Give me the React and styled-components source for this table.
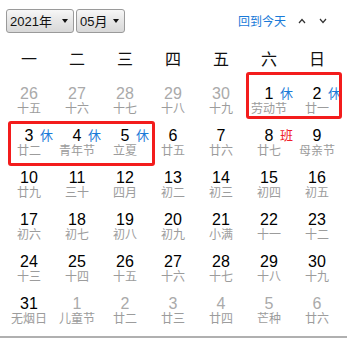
import React from "react";
import styled, { createGlobalStyle } from "styled-components";

const Global = createGlobalStyle`
  html, body { margin: 0; padding: 0; background: #fff; }
  body { font-family: "Liberation Sans", "Noto Sans CJK SC", sans-serif; }
`;

const Root = styled.div`
  position: relative;
  width: 347px;
  height: 341px;
  overflow: hidden;
`;

const Header = styled.div`
  display: flex;
  align-items: center;
  height: 24px;
  padding: 9px 0 0 6px;
`;

const SelectWrap = styled.div`
  position: relative;
  width: ${(p) => p.$w}px;
  height: 24px;
  margin-right: 2px;
`;

const Select = styled.select`
  appearance: none;
  -webkit-appearance: none;
  box-sizing: border-box;
  width: 100%;
  height: 24px;
  margin: 0;
  padding: 0 0 0 3px;
  border: 1px solid #9a9a9a;
  border-radius: 3px;
  background: linear-gradient(#f7f7f7, #e6e6e6 50%, #d8d8d8);
  font-family: "Liberation Sans", "Noto Sans CJK SC", sans-serif;
  font-size: 13px;
  color: #111;
  outline: none;
`;

const Arrow = styled.span`
  position: absolute;
  right: 6px;
  top: 10px;
  width: 0;
  height: 0;
  border-left: 3px solid transparent;
  border-right: 3px solid transparent;
  border-top: 4px solid #111;
  pointer-events: none;
`;

const Spacer = styled.div`
  flex: 1;
`;

const TodayLink = styled.a`
  font-family: "Noto Sans CJK SC", sans-serif;
  font-size: 12px;
  color: #1a7ad8;
  text-decoration: none;
  line-height: 16px;
  margin-right: 12px;
`;

const Chevron = styled.svg`
  display: block;
  width: 8px;
  height: 6px;
  margin-right: ${(p) => p.$mr}px;
`;

const WeekRow = styled.div`
  display: grid;
  grid-template-columns: repeat(7, 48px);
  margin: 9px 0 0 5px;
  height: 32px;
`;

const WeekDay = styled.div`
  font-family: "Noto Sans CJK SC", sans-serif;
  font-size: 16px;
  line-height: 32px;
  text-align: center;
  color: #111;
`;

const Grid = styled.div`
  display: grid;
  grid-template-columns: repeat(7, 48px);
  grid-auto-rows: 42px;
  margin-left: 5px;
`;

const Cell = styled.div`
  position: relative;
  box-sizing: border-box;
  padding-top: 11px;
  text-align: center;
`;

const DayNum = styled.div`
  font-family: "Liberation Sans", sans-serif;
  font-size: 16px;
  line-height: 17px;
  color: ${(p) => (p.$other ? "#aaaaaa" : "#000")};
`;

const Lunar = styled.div`
  font-family: "Liberation Sans", "Noto Sans CJK SC", sans-serif;
  font-size: 12px;
  line-height: 13px;
  margin-top: 1px;
  color: #9c9c9c;
  white-space: nowrap;
`;

const Tag = styled.span`
  position: absolute;
  left: calc(50% + 11px);
  top: 10px;
  font-family: "Noto Sans CJK SC", sans-serif;
  font-size: 13px;
  line-height: 17px;
  color: ${(p) => (p.$work ? "#f0202a" : "#1a7ad8")};
`;

const Mark = styled.div`
  position: absolute;
  box-sizing: border-box;
  border: 3px solid #f31c1c;
  border-radius: 3px;
  pointer-events: none;
`;

const BottomLine = styled.div`
  margin-top: 10px;
  height: 2px;
  background: #b0b0b0;
`;

const weekdays = ["一", "二", "三", "四", "五", "六", "日"];

const days = [
  [26, "十五", 1], [27, "十六", 1], [28, "十七", 1], [29, "十八", 1], [30, "十九", 1], [1, "劳动节", 0, "休"], [2, "廿一", 0, "休"],
  [3, "廿二", 0, "休"], [4, "青年节", 0, "休"], [5, "立夏", 0, "休"], [6, "廿五"], [7, "廿六"], [8, "廿七", 0, "班"], [9, "母亲节"],
  [10, "廿九"], [11, "三十"], [12, "四月"], [13, "初二"], [14, "初三"], [15, "初四"], [16, "初五"],
  [17, "初六"], [18, "初七"], [19, "初八"], [20, "初九"], [21, "小满"], [22, "十一"], [23, "十二"],
  [24, "十三"], [25, "十四"], [26, "十五"], [27, "十六"], [28, "十七"], [29, "十八"], [30, "十九"],
  [31, "无烟日"], [1, "儿童节", 1], [2, "廿二", 1], [3, "廿三", 1], [4, "廿四", 1], [5, "芒种", 1], [6, "廿六", 1],
];

export default function App() {
  return (
    <Root>
      <Global />
      <Header>
        <SelectWrap $w={68}>
          <Select defaultValue="2021">
            <option value="2021">2021年</option>
          </Select>
          <Arrow />
        </SelectWrap>
        <SelectWrap $w={49}>
          <Select defaultValue="05">
            <option value="05">05月</option>
          </Select>
          <Arrow />
        </SelectWrap>
        <Spacer />
        <TodayLink href="#">回到今天</TodayLink>
        <Chevron viewBox="0 0 8 6" $mr={13}>
          <polyline points="1,5 4,1.5 7,5" fill="none" stroke="#333" strokeWidth="1.2" />
        </Chevron>
        <Chevron viewBox="0 0 8 6" $mr={20}>
          <polyline points="1,1 4,4.5 7,1" fill="none" stroke="#333" strokeWidth="1.2" />
        </Chevron>
      </Header>
      <WeekRow>
        {weekdays.map((w) => (
          <WeekDay key={w}>{w}</WeekDay>
        ))}
      </WeekRow>
      <Grid>
        {days.map(([n, l, other, tag], i) => (
          <Cell key={i}>
            <DayNum $other={!!other}>{n}</DayNum>
            <Lunar>{l}</Lunar>
            {tag && <Tag $work={tag === "班"}>{tag}</Tag>}
          </Cell>
        ))}
      </Grid>
      <BottomLine />
      <Mark style={{ left: 246, top: 72, width: 96, height: 47 }} />
      <Mark style={{ left: 8, top: 121, width: 147, height: 45 }} />
    </Root>
  );
}
